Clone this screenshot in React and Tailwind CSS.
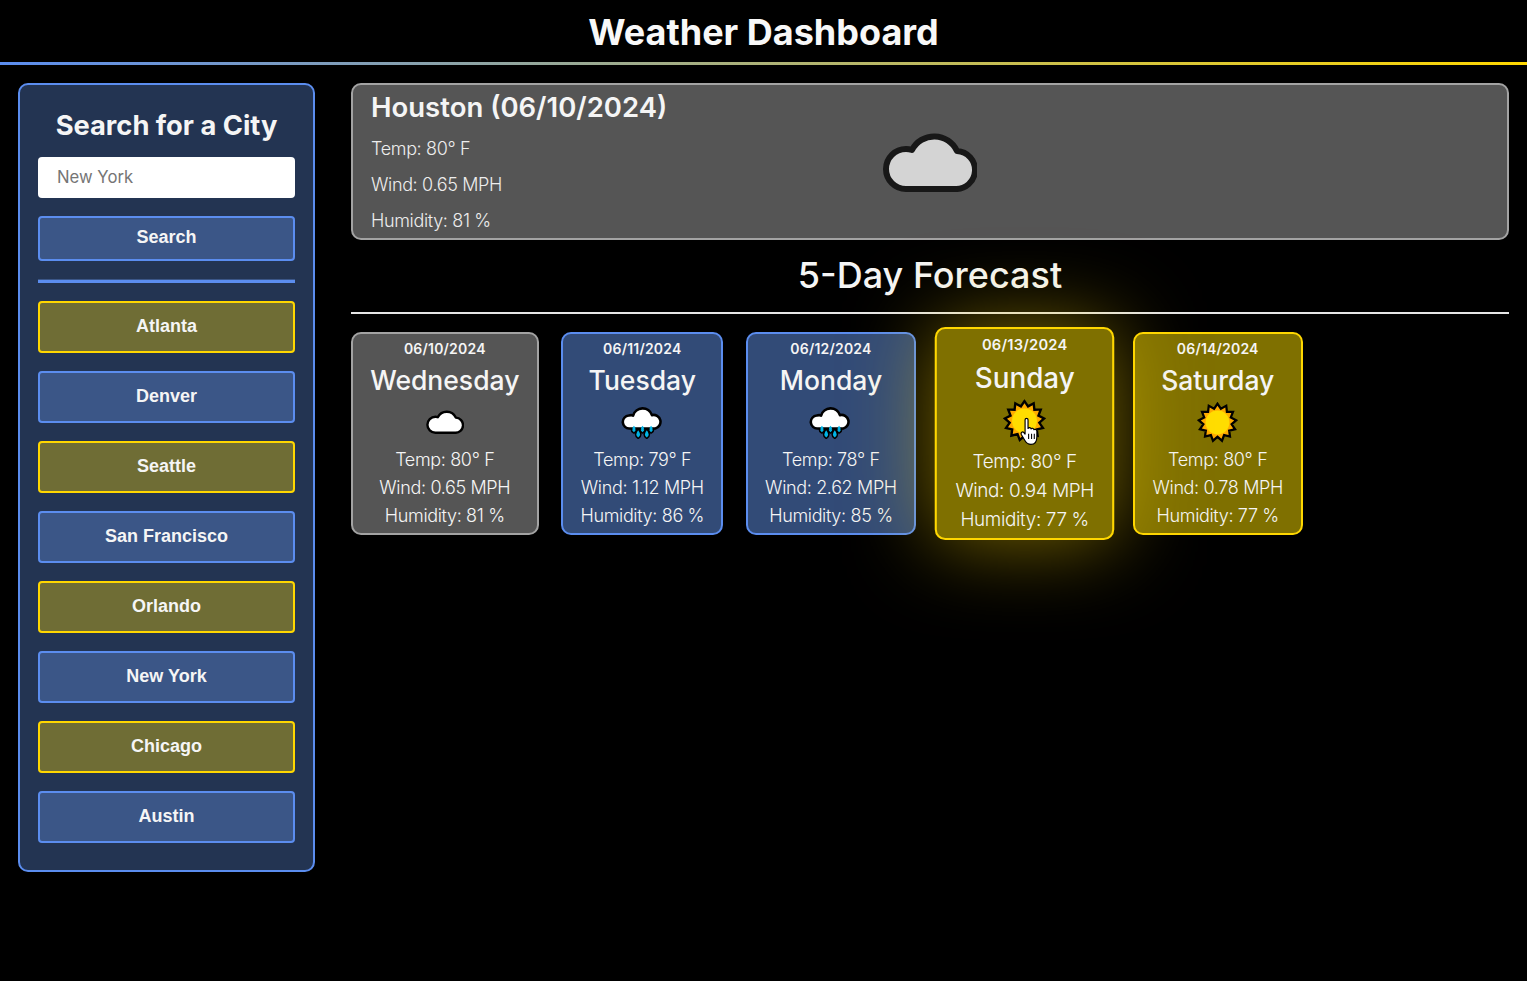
import React from "react";

const cities = ["Atlanta", "Denver", "Seattle", "San Francisco", "Orlando", "New York", "Chicago", "Austin"];

const cloudPath = "M23 57A20 20 0 0 1 23 17Q26 17 29 18A25 25 0 0 1 74 19A19 19 0 0 1 72 57Z";

function Cloud({ className, fill = "#fff", stroke = "#000" }) {
  return (
    <svg viewBox="0 0 94 60" className={className}>
      <path d={cloudPath} fill={fill} stroke={stroke} strokeWidth="6" strokeLinejoin="round" />
    </svg>
  );
}

function Rain({ className }) {
  const drops = [[30, 52], [40, 64], [50, 52], [60, 64], [70, 52]];
  return (
    <svg viewBox="0 0 100 84" className={className}>
      {drops.map(([x, y]) => (
        <path key={`o${x}`} d={`M${x} ${y - 10}Q${x + 9} ${y + 1} ${x} ${y + 7}Q${x - 9} ${y + 1} ${x} ${y - 10}Z`} fill="#00b4e6" stroke="#000" strokeWidth="7" strokeLinejoin="round" paintOrder="stroke" />
      ))}
      <path d="M20 50A15 15 0 0 1 18 20Q24 18 28 20A23 23 0 0 1 72 19A16 16 0 0 1 80 50Z" fill="#fff" stroke="#000" strokeWidth="6" strokeLinejoin="round" />
      {drops.filter((_, i) => i % 2 === 0).map(([x, y]) => (
        <path key={`d${x}`} d={`M${x} ${y - 8}Q${x + 7} ${y} ${x} ${y + 4}Q${x - 7} ${y} ${x} ${y - 8}Z`} fill="#00b4e6" />
      ))}
    </svg>
  );
}

function sunPoints(n, outer, inner) {
  const pts = [];
  for (let i = 0; i < n * 2; i++) {
    const r = i % 2 === 0 ? outer : inner;
    const a = (Math.PI * i) / n - Math.PI / 2;
    pts.push(`${(50 + r * Math.cos(a)).toFixed(2)},${(50 + r * Math.sin(a)).toFixed(2)}`);
  }
  return pts.join(" ");
}

function Sun({ className }) {
  return (
    <svg viewBox="0 0 100 100" className={className}>
      <polygon points={sunPoints(13, 41, 31)} fill="#ffab00" stroke="#000" strokeWidth="11" strokeLinejoin="miter" strokeMiterlimit="4" paintOrder="stroke" />
      <circle cx="50" cy="50" r="29" fill="#ffdd00" />
    </svg>
  );
}

function HandCursor({ className }) {
  return (
    <svg viewBox="0 0 16 24" className={className}>
      <path d="M4.5 2.2C4.5 .6 7 .6 7 2.2V9.5C7.4 8.4 9.4 8.5 9.6 9.9 10 9 11.9 9.2 12 10.6 12.5 9.9 14.5 10.2 14.5 11.8V16.5C14.5 20 13 23 9.5 23 6.5 23 5.5 21.8 4.2 19.5L1.3 14.6C.5 13 2.4 11.7 3.5 13L4.5 14.3Z" fill="#fff" stroke="#000" strokeWidth="1" strokeLinejoin="round" />
      <path d="M7.5 14V18.5M10 14V18.5M12.3 14V18.5" stroke="#000" strokeWidth="0.9" fill="none" />
    </svg>
  );
}

function ForecastCard({ date, day, temp, wind, humidity, cardClass, children, hover }) {
  return (
    <div className={`flex flex-col items-center rounded-[10px] border-2 text-[#f5f5f5] shrink-0 h-[203px] ${cardClass}`}>
      <div className="mt-[6px] text-[14px] leading-[17px] font-semibold tracking-[0.2px]">{date}</div>
      <div className="mt-[6px] text-[26.5px] leading-[34px] font-medium whitespace-nowrap">{day}</div>
      <div className="relative mt-[5px] h-[40px] flex items-center justify-center">
        {children}
        {hover && <HandCursor className="absolute left-[16px] top-[16px] w-[18px] h-[27px]" />}
      </div>
      <div className="mt-[3.5px] flex flex-col items-center text-[18px] tracking-[-0.35px] leading-[28px] font-light whitespace-nowrap">
        <div>Temp: {temp}° F</div>
        <div>Wind: {wind} MPH</div>
        <div>Humidity: {humidity} %</div>
      </div>
    </div>
  );
}

export default function App() {
  return (
    <div className="min-h-screen bg-black text-white font-['Inter','Liberation_Sans',sans-serif]">
      <header className="h-[62px] flex items-center justify-center">
        <h1 className="text-[36px] font-bold leading-none text-[#f8f8f8] translate-y-[1px]">Weather Dashboard</h1>
      </header>
      <div className="h-[3px] bg-linear-to-r/srgb from-[#5b8def] to-[#ffd700]" />

      <div className="flex items-start gap-[36px] pt-[18px] pl-[18px] pr-[18px]">
        <aside className="w-[297px] shrink-0 rounded-[10px] border-2 border-[#5b8def] bg-[#233452] px-[18px] pt-[25px] pb-[27px]">
          <h2 className="text-center text-[27.3px] leading-[32px] font-bold text-[#f5f5f5] whitespace-nowrap">Search for a City</h2>
          <input
            placeholder="New York"
            className="mt-[15px] block w-full h-[41px] rounded-[4px] bg-white pl-[19px] pr-[19px] pb-[2px] text-[16.7px] font-normal text-black placeholder:text-[#757575] outline-none"
          />
          <button className="mt-[18px] block w-full h-[45px] pb-[2px] rounded-[4px] border-2 border-[#5b8def] bg-[#3b5687] text-[18px] font-bold text-[#f5f5f5] font-['Liberation_Sans',sans-serif]">
            Search
          </button>
          <div className="mt-[18px] h-[4px] bg-[#5b8def] border-t border-[#3b5687]" />
          <div className="mt-[18px] flex flex-col gap-[18px]">
            {cities.map((c, i) => (
              <button
                key={c}
                className={`h-[52px] pb-[2px] rounded-[4px] border-2 text-[18px] font-bold text-[#f5f5f5] font-['Liberation_Sans',sans-serif] ${
                  i % 2 === 0 ? "border-[#ffd700] bg-[#6f6d35]" : "border-[#5b8def] bg-[#3b5687]"
                }`}
              >
                {c}
              </button>
            ))}
          </div>
        </aside>

        <main className="flex-1 min-w-0">
          <section className="relative h-[157px] rounded-[10px] border-2 border-[#a3a3a3] bg-[#555555] px-[18px] text-[#ededed]">
            <h2 className="text-[27.5px] leading-[34px] mt-[5px] font-semibold text-[#f5f5f5]">Houston (06/10/2024)</h2>
            <div className="mt-[11px] flex flex-col gap-[8px] text-[18px] tracking-[-0.35px] leading-[28px] font-light">
              <div>Temp: 80° F</div>
              <div>Wind: 0.65 MPH</div>
              <div>Humidity: 81 %</div>
            </div>
            <Cloud className="absolute left-[530px] top-[47px] w-[94px] h-[60px]" fill="#d4d4d4" stroke="#181818" />
          </section>

          <h2 className="mt-[13px] text-center text-[36px] leading-[44px] font-medium text-[#f5f5f5]">5-Day Forecast</h2>
          <div className="mt-[15px] h-[2px] bg-[#e6e6e6]" />

          <div className="mt-[18px] flex gap-[22.7px]">
            <ForecastCard cardClass="w-[187.6px] border-[#a3a3a3] bg-[#555555]" date="06/10/2024" day="Wednesday" temp="80" wind="0.65" humidity="81">
              <Cloud className="w-[38px] h-[24px]" />
            </ForecastCard>
            <ForecastCard cardClass="w-[162px] border-[#5b8def] bg-[#324b77]" date="06/11/2024" day="Tuesday" temp="79" wind="1.12" humidity="86">
              <Rain className="w-[43px] h-[36px] translate-y-[3px]" />
            </ForecastCard>
            <ForecastCard cardClass="w-[170px] border-[#5b8def] bg-[#324b77]" date="06/12/2024" day="Monday" temp="78" wind="2.62" humidity="85">
              <Rain className="w-[43px] h-[36px] translate-y-[3px]" />
            </ForecastCard>
            <ForecastCard hover cardClass="w-[171.4px] border-[#ffd700] bg-[#7f7000] scale-105 relative z-10 shadow-[0_0_80px_rgba(255,215,0,0.5)]" date="06/13/2024" day="Sunday" temp="80" wind="0.94" humidity="77">
              <Sun className="w-[41px] h-[41px] -translate-y-[1px]" />
            </ForecastCard>
            <ForecastCard cardClass="w-[170px] border-[#ffd700] bg-[#7f7000]" date="06/14/2024" day="Saturday" temp="80" wind="0.78" humidity="77">
              <Sun className="w-[41px] h-[41px]" />
            </ForecastCard>
          </div>
        </main>
      </div>
    </div>
  );
}
